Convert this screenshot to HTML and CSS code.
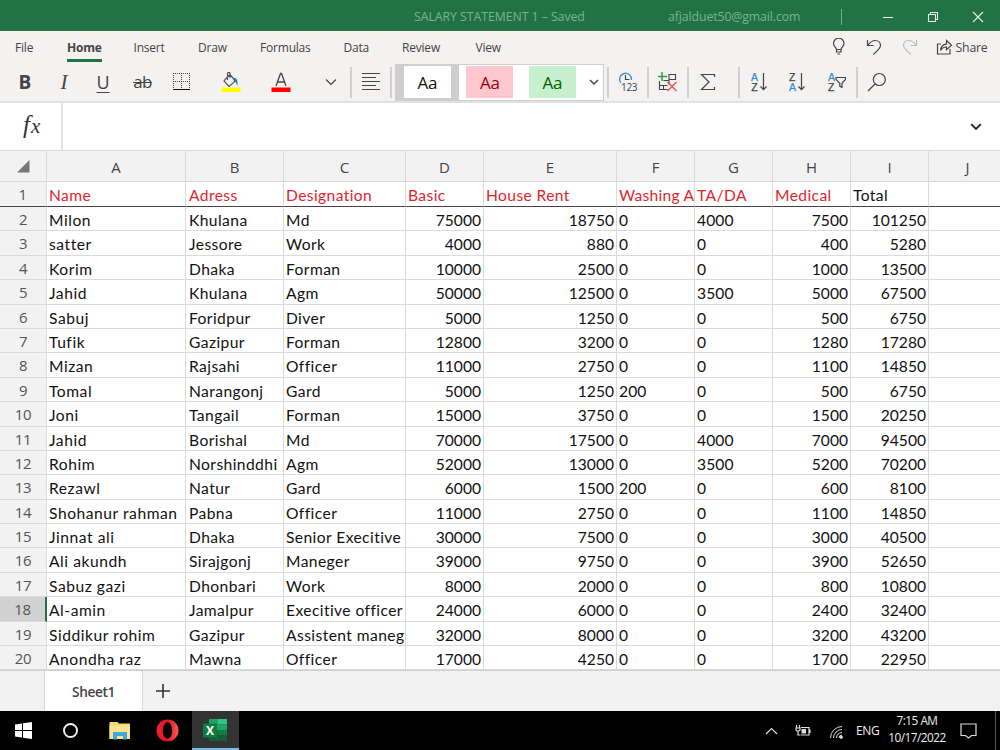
FILE: index.html
```
<!DOCTYPE html>
<html lang="en">
<head>
<meta charset="utf-8">
<title>SALARY STATEMENT 1</title>
<link rel="stylesheet" href="styles.css">
</head>
<body>
<header class="titlebar">
  <span class="doc-title">SALARY STATEMENT 1 – Saved</span>
  <span class="account">afjalduet50@gmail.com</span>
  <span class="title-sep"></span>
  <svg class="win-btn" width="12" height="12" viewBox="0 0 12 12"><path d="M1 6.500h10"/></svg>
  <svg class="win-btn" width="12" height="12" viewBox="0 0 12 12"><path d="M1.500 3.500h7v7h-7zM3.500 3.500v-2h7v7h-2"/></svg>
  <svg class="win-btn" width="12" height="12" viewBox="0 0 12 12"><path d="M1 1l10 10M11 1L1 11"/></svg>
</header>

<nav class="tabs">
  <span>File</span><span class="active">Home</span><span>Insert</span><span>Draw</span><span>Formulas</span><span>Data</span><span>Review</span><span>View</span>
  <div class="quick">
    <svg class="ink" width="14" height="18" viewBox="0 0 14 18"><path d="M4.500 11.500c0-2-3-3-3-6a5.200 5.200 0 0 1 10.500 0c0 3-3 4-3 6zM4.500 11.500v2.500h4.500v-2.500M5.500 16h2.500"/></svg>
    <svg class="ink" width="16" height="18" viewBox="0 0 16 18"><path d="M1.500 2v5.500h6M1.800 7.200C4 4.500 6 2.500 9 2.500c3.500 0 5.500 2.300 5.500 5 0 2.500-1.500 3.500-7 9"/></svg>
    <svg class="ink faded" width="16" height="18" viewBox="0 0 16 18"><path d="M14.500 2v5.500h-6M14.200 7.200C12 4.500 10 2.500 7 2.500c-3.500 0-5.500 2.300-5.500 5 0 2.500 1.500 3.500 7.500 9"/></svg>
    <svg class="ink" width="17" height="16" viewBox="0 0 17 16"><path d="M5 5H1.500v10h12.500v-5M4.500 11.500c.5-4 2.500-6 6-6.300V1.500l5 4.700-5 4.500V8c-3 0-4.500 1-6 3.500z"/></svg>
    <span class="share">Share</span>
  </div>
</nav>

<div class="toolbar">
  <span class="tool bold">B</span>
  <span class="tool italic">I</span>
  <span class="tool underline">U</span>
  <span class="tool strike">ab</span>
  <span class="tool"><svg width="18" height="18" viewBox="0 0 18 18" fill="none" stroke="#444"><path d="M0 .5h18M0 8.500h18M.5 0v16M8.500 0v16M16.500 0v16" stroke-dasharray="1 1"/><path d="M0 16.500h17" stroke="#111"/></svg></span>
  <span class="tool"><svg width="20" height="21" viewBox="0 0 20 21" fill="none"><path d="M5 6.500L9 2.500l5.500 6.500-6.500 5.500-5-5.500zM6.500 8V1.500c0-1.500 2.500-1.500 2.500 0V6" stroke="#555" stroke-width="1.200"/><path d="M12.500 6c2.500-.5 4.500 1 4 8-1-3-2-5-4-5.500z" fill="#1b75bc"/><path d="M.5 15.500h19V20H.5z" fill="#ff0"/></svg></span>
  <span class="tool"><svg width="20" height="21" viewBox="0 0 20 21" fill="none"><path d="M5 14L9.500 1.500h1L15 14M6.500 10h7" stroke="#444" stroke-width="1.300"/><path d="M.5 15.500h19V20H.5z" fill="red"/></svg></span>
  <span class="tool more"><svg class="ink" width="12" height="8" viewBox="0 0 12 8"><path d="M1 1.500l5 5 5-5"/></svg></span>
  <span class="sep"></span>
  <span class="tool"><svg class="ink" width="18" height="18" viewBox="0 0 18 18"><path d="M0 .5h18M0 4.500h14M0 8.500h18M0 12.500h14M0 16.500h18"/></svg></span>
  <span class="sep"></span>
  <div class="gallery">
    <span class="style-slot chosen"><b class="swatch">Aa</b></span>
    <span class="style-slot"><b class="swatch bad">Aa</b></span>
    <span class="style-slot"><b class="swatch good">Aa</b></span>
    <svg class="ink" width="10" height="7" viewBox="0 0 10 7"><path d="M1 1l4 4 4-4" stroke-width="1.500"/></svg>
  </div>
  <span class="sep after-gallery"></span>
  <span class="tool"><svg class="clock" width="20" height="24" viewBox="0 -2 20 24" fill="none"><path d="M2.700 10.800A6 6 0 1 1 13.500 8" stroke="#3c96cf" stroke-width="1.400"/><path d="M7.500 3v4.500h4" stroke="#444" stroke-width="1.200"/><text x="3" y="18.500" textLength="16.500">123</text></svg></span>
  <span class="sep"></span>
  <span class="tool"><svg width="20" height="20" viewBox="0 0 20 20" fill="none" stroke="#444" stroke-width="1.100"><path d="M10.500 2.500h7v5h-7M1.500 9v8.500h8M1.500 13.500h8M5.500 13.500v4M5.500 8.500h5.500v4M11 2.500v6"/><path d="M4 0v9M0 4.500h9" stroke="#2da04a" stroke-width="1.500"/><path d="M9.500 10l9 9M18.500 10l-9 9" stroke="#f04b4b" stroke-width="1.300"/></svg></span>
  <span class="sep"></span>
  <span class="tool sum"><svg class="ink" width="16" height="18" viewBox="0 0 16 18"><path d="M14.500 4V1.500H1.500L9 9l-7.500 7.500h13V14"/></svg></span>
  <span class="sep after-sum"></span>
  <span class="tool"><svg class="sort" width="18" height="24" viewBox="0 -2 18 24"><text class="blue" x="1" y="8.500">A</text><text x="1.200" y="18.500">Z</text><path d="M13.500 1v16.500M10.500 14.500l3 3.200 3-3.200"/></svg></span>
  <span class="tool"><svg class="sort" width="18" height="24" viewBox="0 -2 18 24"><text x="0" y="8.500">Z</text><text class="blue" x="0" y="18.500">A</text><path d="M12.500 1v16.500M9.500 14.500l3 3.200 3-3.200"/></svg></span>
  <span class="tool"><svg class="sort" width="18" height="24" viewBox="0 -2 18 24"><text class="blue" x="0" y="8.500">A</text><text x="0" y="18.500">Z</text><path d="M8 5.500h9.500v1.800l-3.500 4v4l-2.200-1v-3L8 7.300z"/></svg></span>
  <span class="sep"></span>
  <span class="tool"><svg class="ink" width="20" height="20" viewBox="0 0 20 20"><circle cx="12.300" cy="7.500" r="6"/><path d="M8 12l-7 7"/></svg></span>
</div>

<div class="formula">
  <span class="fx"><i>f</i><i class="x">x</i></span>
  <svg class="ink dark" width="12" height="8" viewBox="0 0 12 8"><path d="M1.200 1.200l4.800 4.800 4.800-4.800"/></svg>
</div>

<main class="sheet">
  <div class="row letters"><span><svg width="13" height="13" viewBox="0 0 13 13"><path d="M12.500 0v12.500H0z" fill="#777"/></svg></span><span>A</span><span>B</span><span>C</span><span>D</span><span>E</span><span>F</span><span>G</span><span>H</span><span>I</span><span>J</span></div>
  <div class="row heads"><span>1</span><span>Name</span><span>Adress</span><span>Designation</span><span>Basic</span><span>House Rent</span><span>Washing A</span><span>TA/DA</span><span>Medical</span><span>Total</span><span></span></div>
  <div class="row"><span>2</span><span>Milon</span><span>Khulana</span><span>Md</span><span>75000</span><span>18750</span><span>0</span><span>4000</span><span>7500</span><span>101250</span><span></span></div>
  <div class="row"><span>3</span><span>satter</span><span>Jessore</span><span>Work</span><span>4000</span><span>880</span><span>0</span><span>0</span><span>400</span><span>5280</span><span></span></div>
  <div class="row"><span>4</span><span>Korim</span><span>Dhaka</span><span>Forman</span><span>10000</span><span>2500</span><span>0</span><span>0</span><span>1000</span><span>13500</span><span></span></div>
  <div class="row"><span>5</span><span>Jahid</span><span>Khulana</span><span>Agm</span><span>50000</span><span>12500</span><span>0</span><span>3500</span><span>5000</span><span>67500</span><span></span></div>
  <div class="row"><span>6</span><span>Sabuj</span><span>Foridpur</span><span>Diver</span><span>5000</span><span>1250</span><span>0</span><span>0</span><span>500</span><span>6750</span><span></span></div>
  <div class="row"><span>7</span><span>Tufik</span><span>Gazipur</span><span>Forman</span><span>12800</span><span>3200</span><span>0</span><span>0</span><span>1280</span><span>17280</span><span></span></div>
  <div class="row"><span>8</span><span>Mizan</span><span>Rajsahi</span><span>Officer</span><span>11000</span><span>2750</span><span>0</span><span>0</span><span>1100</span><span>14850</span><span></span></div>
  <div class="row"><span>9</span><span>Tomal</span><span>Narangonj</span><span>Gard</span><span>5000</span><span>1250</span><span>200</span><span>0</span><span>500</span><span>6750</span><span></span></div>
  <div class="row"><span>10</span><span>Joni</span><span>Tangail</span><span>Forman</span><span>15000</span><span>3750</span><span>0</span><span>0</span><span>1500</span><span>20250</span><span></span></div>
  <div class="row"><span>11</span><span>Jahid</span><span>Borishal</span><span>Md</span><span>70000</span><span>17500</span><span>0</span><span>4000</span><span>7000</span><span>94500</span><span></span></div>
  <div class="row"><span>12</span><span>Rohim</span><span>Norshinddhi</span><span>Agm</span><span>52000</span><span>13000</span><span>0</span><span>3500</span><span>5200</span><span>70200</span><span></span></div>
  <div class="row"><span>13</span><span>Rezawl</span><span>Natur</span><span>Gard</span><span>6000</span><span>1500</span><span>200</span><span>0</span><span>600</span><span>8100</span><span></span></div>
  <div class="row"><span>14</span><span>Shohanur rahman</span><span>Pabna</span><span>Officer</span><span>11000</span><span>2750</span><span>0</span><span>0</span><span>1100</span><span>14850</span><span></span></div>
  <div class="row"><span>15</span><span>Jinnat ali</span><span>Dhaka</span><span>Senior Execitive</span><span>30000</span><span>7500</span><span>0</span><span>0</span><span>3000</span><span>40500</span><span></span></div>
  <div class="row"><span>16</span><span>Ali akundh</span><span>Sirajgonj</span><span>Maneger</span><span>39000</span><span>9750</span><span>0</span><span>0</span><span>3900</span><span>52650</span><span></span></div>
  <div class="row"><span>17</span><span>Sabuz gazi</span><span>Dhonbari</span><span>Work</span><span>8000</span><span>2000</span><span>0</span><span>0</span><span>800</span><span>10800</span><span></span></div>
  <div class="row selected"><span>18</span><span>Al-amin</span><span>Jamalpur</span><span>Execitive officer</span><span>24000</span><span>6000</span><span>0</span><span>0</span><span>2400</span><span>32400</span><span></span></div>
  <div class="row"><span>19</span><span>Siddikur rohim</span><span>Gazipur</span><span>Assistent maneg</span><span>32000</span><span>8000</span><span>0</span><span>0</span><span>3200</span><span>43200</span><span></span></div>
  <div class="row"><span>20</span><span>Anondha raz</span><span>Mawna</span><span>Officer</span><span>17000</span><span>4250</span><span>0</span><span>0</span><span>1700</span><span>22950</span><span></span></div>
</main>

<div class="sheetbar">
  <span class="sheet-tab">Sheet1</span>
  <svg width="16" height="16" viewBox="0 0 16 16"><path d="M8 1v14M1 8h14" stroke="#333" stroke-width="1.600"/></svg>
</div>

<footer class="taskbar">
  <span class="app"><svg width="17" height="17" viewBox="0 0 17 17" fill="#fff"><path d="M0 2.500l7-1V8H0zM8 1.300L17 0v8H8zM0 9h7v6.500l-7-1zM8 9h9v8l-9-1.300z"/></svg></span>
  <span class="app"><svg width="17" height="17" viewBox="0 0 17 17"><circle cx="8.500" cy="8.500" r="6.500" fill="none" stroke="#eee" stroke-width="2"/></svg></span>
  <span class="app"><svg width="22" height="19" viewBox="0 0 22 19"><path d="M.5 1h8l1.500 1.500h11V18H.5z" fill="#f7d56a"/><path d="M.5 4.500h20.500V18H.5z" fill="#fde28d"/><path d="M4 18.500v-7.500h14v7.500h-4v-3.500H8v3.500z" fill="#41a8d8"/></svg></span>
  <span class="app"><svg width="23" height="23" viewBox="0 0 23 23"><defs><linearGradient id="opera" x1="0" x2="1"><stop offset="0" stop-color="#f5202f"/><stop offset=".5" stop-color="#d81526"/><stop offset="1" stop-color="#ff5a50"/></linearGradient></defs><circle cx="11.500" cy="11.500" r="11" fill="url(#opera)"/><ellipse cx="11.500" cy="11.500" rx="4.700" ry="8.300" fill="#0a0000"/></svg></span>
  <span class="app running"><svg width="24" height="22" viewBox="0 0 24 22"><path d="M6 0h9v11H6z" fill="#21a366"/><path d="M15 0h9v5.500h-9z" fill="#33c481"/><path d="M15 5.500h9V11h-9z" fill="#21a366"/><path d="M6 11h9v11H6z" fill="#185c37"/><path d="M15 11h9v5.500h-9z" fill="#107c41"/><path d="M15 16.500h9V22h-9z" fill="#185c37"/><path d="M0 4.500h14v14H0z" fill="#107c41"/><text class="excel-x" x="3" y="16">X</text></svg></span>
  <div class="tray">
    <svg width="13" height="8" viewBox="0 0 13 8"><path d="M1 7l5.500-5.500L12 7"/></svg>
    <svg width="16" height="12" viewBox="0 0 16 12"><path d="M6 2.500h8v7.500H5.500M15 4.500v3.500M1.500 0v2.500M4.500 0v2.500M1 3h4v2l-1 1H2l-1-1zM3 6v4h2"/><path d="M6.500 4h4.500v4.500H6.500z" fill="#ddd" stroke="none"/></svg>
    <svg class="wifi" width="14" height="14" viewBox="0 0 14 14"><path d="M1.500 13A11.500 11.500 0 0 1 13 1.500M4.500 13A8.500 8.500 0 0 1 13 4.500M7.500 13A5.500 5.500 0 0 1 13 7.500M10 13a3 3 0 0 1 3-3"/><circle cx="12.200" cy="12.200" r="1.200" fill="#ddd"/></svg>
    <span class="lang">ENG</span>
    <span class="time">7:15 AM<br>10/17/2022</span>
    <svg width="17" height="16" viewBox="0 0 17 16"><path d="M1 1h15v11.500h-4.500l-3 2.500-3-2.500H1z"/></svg>
    <span class="peek"></span>
  </div>
</footer>
</body>
</html>
```
FILE: styles.css
```
* { box-sizing: border-box; }
body {
  margin: 0; width: 1000px; height: 750px; overflow: hidden;
  display: flex; flex-direction: column;
  font: 12px "Open Sans", sans-serif; color: #444; background: #fff;
}
svg { display: block; flex: none; }
.ink { fill: none; stroke: #444; stroke-width: 1.200; }
.faded { stroke: #bbb; }
.dark { stroke: #222; stroke-width: 1.800; }

.titlebar {
  flex: none; height: 31px; padding-left: 414px; background: #217346; color: #76b48e;
  display: grid; grid-template-columns: 254px 173px 41px 45px 45px 12px; align-items: center;
  font-size: 12px; white-space: nowrap; padding-top: 2px;
}
.doc-title { font-size: 12.300px; letter-spacing: -.05px; }
.account { font-size: 12.300px; letter-spacing: -.1px; }
.title-sep { width: 1px; height: 16px; background: #76b48e; }
.win-btn { fill: none; stroke: #e5f2ea; stroke-width: 1.100; }

.tabs {
  flex: none; height: 32px; padding-left: 15px; background: #f3f2f1;
  display: grid; grid-template-columns: 52px 66.500px 64.500px 62px 83.500px 58.500px 73.500px 356px auto;
  align-items: center; white-space: nowrap; letter-spacing: -.2px;
}
.tabs .active { justify-self: start; align-self: end; height: 23px; font-weight: 700; border-bottom: 3px solid #217346; line-height: 18px; margin-bottom: 1px; }
.quick { display: flex; align-items: center; }
.quick svg + svg { margin-left: 20px; }
.quick svg:nth-child(4) { margin-left: 18px; }
.quick .share { font-size: 12.300px; margin-left: 3px; }

.toolbar {
  flex: none; height: 40px; padding-left: 5px; background: #f3f2f1; border-bottom: 2px solid #e1e1e1;
  display: grid; align-items: center;
  grid-template-columns: 40px 38px 40px 39px 39px 60px 40px 49px 2px 38px 2px 215px 2px 38px 2px 38px 2px 49px 2px 38px 40px 38px 2px 38px;
}
.tool { display: flex; justify-content: center; align-items: center; font-size: 19px; line-height: 24px; }
.more { padding-left: 11px; }
.sum { padding-right: 11px; }
.bold { font-weight: 700; }
.italic { font-family: "Liberation Serif", serif; font-style: italic; font-size: 21px; }
.underline { text-decoration: underline; text-decoration-thickness: 1px; text-underline-offset: 3px; font-size: 18px; }
.strike { text-decoration: line-through; text-decoration-thickness: 1px; font-size: 17px; letter-spacing: -.6px; }
.sep { width: 1.500px; height: 31px; background: #d0d0d0; }
.after-gallery, .after-sum { justify-self: start; }
.gallery {
  margin-left: 3px; width: 209px; height: 37px; background: #fff; border: 1.500px solid #d0cece;
  display: flex; align-items: center;
}
.style-slot { width: 62.500px; height: 100%; display: flex; align-items: center; justify-content: center; }
.chosen { background: #cfcdcd; }
.swatch { width: 47px; height: 32px; background: #fff; color: #111; font: 17px/34px "Open Sans", sans-serif; letter-spacing: -.4px; text-align: center; }
.bad { background: #ffc7ce; color: #9c0006; }
.good { background: #c6efce; color: #006100; }
.gallery .ink { margin-left: 5px; }
.clock text { font: 10px "Open Sans", sans-serif; fill: #444; }
.sort { fill: none; stroke: #444; stroke-width: 1.200; }
.sort text { font: bold 10.500px "Liberation Sans", sans-serif; font-weight: 400; fill: #444; stroke: #444; stroke-width: .25px; }
.sort .blue { fill: #2e8fd0; stroke: #2e8fd0; }

.formula { flex: none; height: 47px; display: flex; align-items: center; justify-content: space-between; padding-right: 18px; }
.fx { width: 63px; height: 47px; border-right: 2px solid #e1e1e1; font: 25px/44px "Liberation Serif", serif; color: #333; padding-left: 23px; }
.fx .x { font-size: 21px; margin-left: 1px; }

.sheet { flex: none; height: 521px; overflow: hidden; border-top: 1px solid #d8d8d8; border-bottom: 1px solid #cfcfcf; }
.row { display: grid; width: 1007px; height: 24.400px; grid-template-columns: 47px 139px 98px 122px 78px 133px 78px 78px 78px 78px 78px; }
.row span {
  border-right: 1px solid #d9dadb; border-bottom: 1px solid #d9dadb; padding: 1px 2px 0 2px; overflow: hidden;
  font: 15.600px/24px Lato, sans-serif; letter-spacing: .42px; color: #111; white-space: nowrap;
}
.row span:nth-child(2) { letter-spacing: .55px; }
.row span:nth-child(3) { padding-left: 3px; }
.row span:nth-child(7), .row span:nth-child(8) { letter-spacing: .1px; }
.row span:nth-child(5), .row span:nth-child(6), .row span:nth-child(9), .row span:nth-child(10) { text-align: right; letter-spacing: 0; }
.row span:first-child { background: #f2f2f2; text-align: center; font: 15px/24px "Open Sans", sans-serif; padding: 0; color: #555; letter-spacing: -.4px; }
.row.letters { height: 31px; }
.row.letters span { background: #f2f2f2; text-align: center; font: 15px/32px "Open Sans", sans-serif; color: #444; padding: 0; letter-spacing: 0; }
.row.letters span:first-child { display: flex; align-items: center; padding-left: 17px; }
.row.heads { height: 25px; }
.row.heads span { border-bottom-color: #4a4244; text-align: left; color: #e3242b; letter-spacing: .4px; padding-right: 0; }
.row.heads span:nth-child(7) { letter-spacing: .25px; }
.row.heads span:first-child { text-align: center; color: #555; }
.row.heads span:nth-child(10) { color: #111; }
.row.selected span:first-child { background: #d2d2d2; border-right: 2px solid #217346; }

.sheetbar { flex: none; height: 40px; background: #f2f2f2; padding-left: 44px; display: flex; align-items: center; }
.sheet-tab { width: 99px; height: 40px; background: #fff; border: 1px solid #d8d8d8; border-width: 0 1px; text-align: center; font-size: 13.700px; line-height: 42px; font-weight: 600; letter-spacing: -.4px; margin-right: 12px; }

.taskbar { flex: none; height: 39px; background: #000; display: flex; color: #eee; }
.app { width: 48.600px; display: flex; justify-content: center; align-items: center; }
.app:first-child { width: 46px; }
.app:nth-child(3) svg { margin-left: 3px; }
.app.running { width: 47px; background: #333; border-bottom: 2px solid #76b9ed; }
.excel-x { font: 700 12px "Open Sans", sans-serif; fill: #fff; }
.tray { margin-left: auto; display: flex; align-items: center; }
.tray svg { fill: none; stroke: #ddd; stroke-width: 1.200; }
.tray svg:nth-child(2) { margin-left: 17px; }
.tray .wifi { margin: 2px 13px 0 18px; stroke-width: 1; }
.lang { font-size: 12px; width: 23px; letter-spacing: -.4px; }
.time { font-size: 11.800px; line-height: 17px; text-align: center; width: 60px; margin: -3px 13px 0 8px; letter-spacing: -.5px; white-space: nowrap; }
.peek { width: 1px; height: 39px; background: #555; margin: 0 4px 0 18px; }
```
